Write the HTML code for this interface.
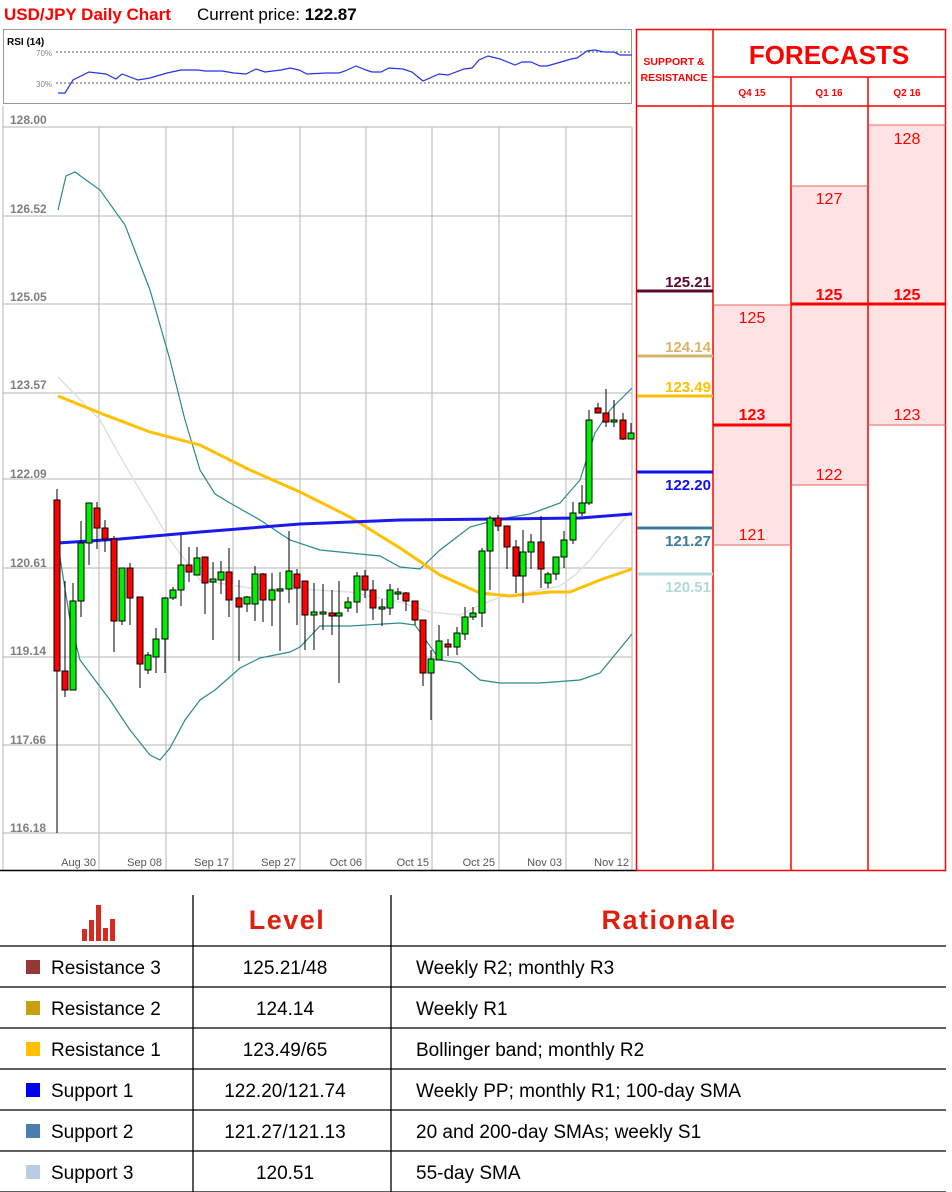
<!DOCTYPE html>
<html><head><meta charset="utf-8"><style>
body{margin:0;background:#fff;width:952px;height:1192px;overflow:hidden;font-family:"Liberation Sans",sans-serif}
svg{display:block}
</style></head><body>
<svg width="952" height="1192" xmlns="http://www.w3.org/2000/svg" font-family="Liberation Sans, sans-serif">
<text x="4" y="20" fill="#ff0000" font-size="17" font-weight="bold">USD/JPY Daily Chart</text>
<text x="197" y="20" fill="#000" font-size="17">Current price: <tspan font-weight="bold">122.87</tspan></text>
<rect x="3.5" y="29.5" width="628" height="74" fill="#fff" stroke="#999"/>
<text x="7" y="45" font-size="10" font-weight="bold">RSI (14)</text>
<text x="36" y="56" font-size="8" fill="#888">70%</text>
<text x="36" y="87" font-size="8" fill="#888">30%</text>
<line x1="56" y1="52" x2="632" y2="52" stroke="#555" stroke-dasharray="2,2"/>
<line x1="56" y1="83" x2="632" y2="83" stroke="#555" stroke-dasharray="2,2"/>
<polyline fill="none" stroke="#2233ee" stroke-width="1.2" points="58,93 65,93 73,80 89,72 106,74 116,79 122,74 138,80 150,78 167,73 181,70 198,70 205,71 222,71 234,73 246,74 256,69 265,72 281,70 290,68 299,70 307,74 326,73 339,73 345,71 356,66 366,70 372,72 381,72 389,68 403,69 412,72 423,81 439,74 448,75 464,69 472,68 479,60 488,56 500,59 515,65 522,62 531,62 540,66 547,66 561,62 571,59 577,58 587,51 595,50 604,52 614,52 620,55 632,55"/>
<g stroke="#b5b5b5" stroke-width="1">
<line x1="3" y1="127" x2="632" y2="127"/><line x1="3" y1="216" x2="632" y2="216"/><line x1="3" y1="304" x2="632" y2="304"/><line x1="3" y1="393" x2="632" y2="393"/><line x1="3" y1="479" x2="632" y2="479"/><line x1="3" y1="568" x2="632" y2="568"/><line x1="3" y1="657" x2="632" y2="657"/><line x1="3" y1="745" x2="632" y2="745"/><line x1="3" y1="833" x2="632" y2="833"/>
<line x1="99" y1="127" x2="99" y2="870"/><line x1="166" y1="127" x2="166" y2="870"/><line x1="233" y1="127" x2="233" y2="870"/><line x1="300" y1="127" x2="300" y2="870"/><line x1="366" y1="127" x2="366" y2="870"/><line x1="432" y1="127" x2="432" y2="870"/><line x1="499" y1="127" x2="499" y2="870"/><line x1="566" y1="127" x2="566" y2="870"/><line x1="632" y1="127" x2="632" y2="870"/>
<line x1="3" y1="106" x2="3" y2="870"/>
</g>
<line x1="0" y1="870.5" x2="637" y2="870.5" stroke="#000" stroke-width="1.5"/>
<g font-size="12" fill="#7f7f7f" font-weight="bold">
<text x="10" y="124">128.00</text><text x="10" y="213">126.52</text><text x="10" y="301">125.05</text><text x="10" y="389">123.57</text><text x="10" y="478">122.09</text><text x="10" y="567">120.61</text><text x="10" y="655">119.14</text><text x="10" y="744">117.66</text><text x="10" y="832">116.18</text>
</g>
<g font-size="11" fill="#555" text-anchor="end">
<text x="96" y="866">Aug 30</text><text x="162" y="866">Sep 08</text><text x="229" y="866">Sep 17</text><text x="296" y="866">Sep 27</text><text x="362" y="866">Oct 06</text><text x="429" y="866">Oct 15</text><text x="495" y="866">Oct 25</text><text x="562" y="866">Nov 03</text><text x="629" y="866">Nov 12</text>
</g>
<polyline fill="none" stroke="#e0e0e0" stroke-width="1.5" points="58,377 100,420 125,465 140,490 170,540 200,580 250,588 300,589 350,592 400,602 430,612 460,615 480,605 500,597 530,592 560,586 575,575 590,560 610,535 632,510"/>
<polyline fill="none" stroke="#2a8a8a" stroke-width="1.2" points="58,210 66,176 75,172 100,190 125,225 150,290 170,360 185,420 200,470 215,494 230,503 260,520 290,540 320,550 350,553 380,556 400,567 420,569 440,550 470,527 500,519 530,514 560,503 580,480 595,433 610,410 632,388"/>
<polyline fill="none" stroke="#2a8a8a" stroke-width="1.2" points="58,545 70,620 80,660 95,680 110,700 130,730 150,755 160,760 170,748 185,720 200,700 215,690 240,668 260,658 290,652 300,647 320,626 350,626 400,623 415,625 440,660 460,663 480,680 500,683 540,683 580,680 600,673 632,634"/>
<polyline fill="none" stroke="#ffc000" stroke-width="3" points="58,396 100,413 150,432 200,445 250,470 300,492 350,517 400,548 440,575 480,593 510,596 550,592 570,592 600,580 632,569"/>
<polyline fill="none" stroke="#1a1aee" stroke-width="3" points="58,543 120,539 200,532 300,524 400,520 500,519 580,518 632,514"/>
<g stroke="#000" stroke-width="1">
<line x1="57" y1="489" x2="57" y2="833"/><rect x="54" y="500" width="6" height="171" fill="#f00"/>
<line x1="65" y1="581" x2="65" y2="697"/><rect x="62" y="671" width="6" height="19" fill="#f00"/>
<line x1="73" y1="583" x2="73" y2="690"/><rect x="70" y="601" width="6" height="89" fill="#0e0"/>
<line x1="81" y1="521" x2="81" y2="617"/><rect x="78" y="543" width="6" height="58" fill="#0e0"/>
<line x1="89" y1="503" x2="89" y2="565"/><rect x="86" y="503" width="6" height="40" fill="#0e0"/>
<line x1="97" y1="502" x2="97" y2="549"/><rect x="94" y="508" width="6" height="20" fill="#f00"/>
<line x1="105" y1="520" x2="105" y2="552"/><rect x="102" y="528" width="6" height="11" fill="#f00"/>
<line x1="114" y1="536" x2="114" y2="652"/><rect x="111" y="539" width="6" height="82" fill="#f00"/>
<line x1="122" y1="568" x2="122" y2="625"/><rect x="119" y="568" width="6" height="53" fill="#0e0"/>
<line x1="130" y1="563" x2="130" y2="625"/><rect x="127" y="568" width="6" height="30" fill="#f00"/>
<line x1="140" y1="597" x2="140" y2="688"/><rect x="137" y="597" width="6" height="67" fill="#f00"/>
<line x1="148" y1="652" x2="148" y2="674"/><rect x="145" y="655" width="6" height="15" fill="#0e0"/>
<line x1="156" y1="628" x2="156" y2="673"/><rect x="153" y="639" width="6" height="18" fill="#0e0"/>
<line x1="165" y1="597" x2="165" y2="673"/><rect x="162" y="598" width="6" height="41" fill="#0e0"/>
<line x1="173" y1="587" x2="173" y2="600"/><rect x="170" y="590" width="6" height="8" fill="#0e0"/>
<line x1="181" y1="535" x2="181" y2="606"/><rect x="178" y="565" width="6" height="25" fill="#0e0"/>
<line x1="189" y1="547" x2="189" y2="582"/><rect x="186" y="565" width="6" height="7" fill="#f00"/>
<line x1="197" y1="547" x2="197" y2="574"/><rect x="194" y="558" width="6" height="17" fill="#0e0"/>
<line x1="205" y1="557" x2="205" y2="614"/><rect x="202" y="557" width="6" height="26" fill="#f00"/>
<line x1="213" y1="562" x2="213" y2="640"/><rect x="210" y="579" width="6" height="3" fill="#0e0"/>
<line x1="221" y1="561" x2="221" y2="594"/><rect x="218" y="572" width="6" height="8" fill="#0e0"/>
<line x1="229" y1="548" x2="229" y2="617"/><rect x="226" y="572" width="6" height="28" fill="#f00"/>
<line x1="239" y1="580" x2="239" y2="661"/><rect x="236" y="598" width="6" height="9" fill="#f00"/>
<line x1="247" y1="596" x2="247" y2="612"/><rect x="244" y="597" width="6" height="7" fill="#0e0"/>
<line x1="255" y1="566" x2="255" y2="621"/><rect x="252" y="574" width="6" height="30" fill="#0e0"/>
<line x1="263" y1="573" x2="263" y2="622"/><rect x="260" y="574" width="6" height="26" fill="#f00"/>
<line x1="272" y1="573" x2="272" y2="626"/><rect x="269" y="590" width="6" height="10" fill="#0e0"/>
<line x1="280" y1="572" x2="280" y2="651"/><rect x="277" y="589" width="6" height="2" fill="#0e0"/>
<line x1="289" y1="531" x2="289" y2="603"/><rect x="286" y="571" width="6" height="18" fill="#0e0"/>
<line x1="297" y1="569" x2="297" y2="625"/><rect x="294" y="574" width="6" height="14" fill="#f00"/>
<line x1="305" y1="581" x2="305" y2="650"/><rect x="302" y="581" width="6" height="34" fill="#f00"/>
<line x1="314" y1="583" x2="314" y2="650"/><rect x="311" y="612" width="6" height="3" fill="#0e0"/>
<line x1="323" y1="584" x2="323" y2="630"/><rect x="320" y="612" width="6" height="2" fill="#0e0"/>
<line x1="332" y1="590" x2="332" y2="635"/><rect x="329" y="613" width="6" height="3" fill="#f00"/>
<line x1="339" y1="581" x2="339" y2="683"/><rect x="336" y="613" width="6" height="3" fill="#0e0"/>
<line x1="348" y1="597" x2="348" y2="612"/><rect x="345" y="602" width="6" height="6" fill="#0e0"/>
<line x1="357" y1="572" x2="357" y2="613"/><rect x="354" y="576" width="6" height="26" fill="#0e0"/>
<line x1="365" y1="570" x2="365" y2="598"/><rect x="362" y="576" width="6" height="14" fill="#f00"/>
<line x1="373" y1="580" x2="373" y2="620"/><rect x="370" y="590" width="6" height="18" fill="#f00"/>
<line x1="382" y1="599" x2="382" y2="626"/><rect x="379" y="607" width="6" height="2" fill="#0e0"/>
<line x1="390" y1="584" x2="390" y2="615"/><rect x="387" y="590" width="6" height="18" fill="#0e0"/>
<line x1="398" y1="588" x2="398" y2="600"/><rect x="395" y="592" width="6" height="2" fill="#0e0"/>
<line x1="406" y1="592" x2="406" y2="611"/><rect x="403" y="593" width="6" height="8" fill="#f00"/>
<line x1="415" y1="601" x2="415" y2="625"/><rect x="412" y="601" width="6" height="19" fill="#f00"/>
<line x1="423" y1="620" x2="423" y2="686"/><rect x="420" y="620" width="6" height="53" fill="#f00"/>
<line x1="431" y1="650" x2="431" y2="720"/><rect x="428" y="659" width="6" height="14" fill="#0e0"/>
<line x1="439" y1="625" x2="439" y2="660"/><rect x="436" y="641" width="6" height="19" fill="#0e0"/>
<line x1="448" y1="639" x2="448" y2="656"/><rect x="445" y="644" width="6" height="3" fill="#f00"/>
<line x1="457" y1="627" x2="457" y2="655"/><rect x="454" y="633" width="6" height="14" fill="#0e0"/>
<line x1="465" y1="607" x2="465" y2="640"/><rect x="462" y="617" width="6" height="17" fill="#0e0"/>
<line x1="473" y1="607" x2="473" y2="620"/><rect x="470" y="613" width="6" height="4" fill="#0e0"/>
<line x1="482" y1="548" x2="482" y2="627"/><rect x="479" y="551" width="6" height="62" fill="#0e0"/>
<line x1="490" y1="516" x2="490" y2="590"/><rect x="487" y="518" width="6" height="33" fill="#0e0"/>
<line x1="498" y1="515" x2="498" y2="531"/><rect x="495" y="518" width="6" height="8" fill="#f00"/>
<line x1="507" y1="526" x2="507" y2="569"/><rect x="504" y="526" width="6" height="21" fill="#f00"/>
<line x1="516" y1="540" x2="516" y2="593"/><rect x="513" y="547" width="6" height="29" fill="#f00"/>
<line x1="523" y1="530" x2="523" y2="603"/><rect x="520" y="552" width="6" height="24" fill="#0e0"/>
<line x1="531" y1="534" x2="531" y2="569"/><rect x="528" y="542" width="6" height="10" fill="#0e0"/>
<line x1="541" y1="516" x2="541" y2="588"/><rect x="538" y="542" width="6" height="27" fill="#f00"/>
<line x1="548" y1="572" x2="548" y2="588"/><rect x="545" y="574" width="6" height="9" fill="#0e0"/>
<line x1="556" y1="557" x2="556" y2="580"/><rect x="553" y="557" width="6" height="17" fill="#0e0"/>
<line x1="564" y1="531" x2="564" y2="568"/><rect x="561" y="540" width="6" height="17" fill="#0e0"/>
<line x1="573" y1="502" x2="573" y2="544"/><rect x="570" y="513" width="6" height="27" fill="#0e0"/>
<line x1="582" y1="485" x2="582" y2="516"/><rect x="579" y="503" width="6" height="10" fill="#0e0"/>
<line x1="589" y1="410" x2="589" y2="505"/><rect x="586" y="420" width="6" height="83" fill="#0e0"/>
<line x1="598" y1="403" x2="598" y2="413"/><rect x="595" y="408" width="6" height="5" fill="#f00"/>
<line x1="606" y1="389" x2="606" y2="427"/><rect x="603" y="413" width="6" height="9" fill="#f00"/>
<line x1="614" y1="400" x2="614" y2="427"/><rect x="611" y="420" width="6" height="2" fill="#0e0"/>
<line x1="623" y1="413" x2="623" y2="440"/><rect x="620" y="420" width="6" height="19" fill="#f00"/>
<line x1="631" y1="423" x2="631" y2="439"/><rect x="628" y="433" width="6" height="6" fill="#0e0"/>
</g>
<rect x="791" y="186" width="77" height="299" fill="#fde3e3"/>
<rect x="868" y="125" width="78" height="300" fill="#fde3e3"/>
<rect x="713" y="305" width="78" height="240" fill="#fde3e3"/>
<g stroke="#f00" stroke-width="1.5" fill="none">
<rect x="636.5" y="29.5" width="309" height="841"/>
<line x1="713" y1="29" x2="713" y2="870"/>
<line x1="791" y1="77" x2="791" y2="870"/>
<line x1="868" y1="77" x2="868" y2="870"/>
<line x1="713" y1="77" x2="946" y2="77"/>
<line x1="636" y1="106" x2="946" y2="106"/>
</g>
<g stroke="#f06060" stroke-width="1">
<line x1="868" y1="125" x2="946" y2="125"/><line x1="791" y1="186" x2="868" y2="186"/><line x1="713" y1="305" x2="791" y2="305"/>
<line x1="713" y1="545" x2="791" y2="545"/><line x1="791" y1="485" x2="868" y2="485"/><line x1="868" y1="425" x2="946" y2="425"/>
</g>
<g stroke="#f00" stroke-width="3"><line x1="791" y1="304" x2="946" y2="304"/><line x1="713" y1="425" x2="791" y2="425"/></g>
<text x="674" y="65" text-anchor="middle" font-size="10.5" font-weight="bold" fill="#f00">SUPPORT &amp;</text>
<text x="674" y="81" text-anchor="middle" font-size="10.5" font-weight="bold" fill="#f00">RESISTANCE</text>
<text x="829" y="64" text-anchor="middle" font-size="26" font-weight="bold" fill="#f00">FORECASTS</text>
<g font-size="10" font-weight="bold" fill="#f00" text-anchor="middle"><text x="752" y="96">Q4 15</text><text x="829" y="96">Q1 16</text><text x="907" y="96">Q2 16</text></g>
<g font-size="16" fill="#f00" text-anchor="middle">
<text x="907" y="144">128</text><text x="829" y="204">127</text><text x="752" y="323">125</text><text x="829" y="480">122</text><text x="907" y="420">123</text><text x="752" y="540">121</text>
<text x="829" y="300" font-weight="bold">125</text><text x="907" y="300" font-weight="bold">125</text><text x="752" y="420" font-weight="bold">123</text>
</g>
<g stroke-width="3">
<line x1="637" y1="291" x2="713" y2="291" stroke="#5a0a30"/><line x1="637" y1="356" x2="713" y2="356" stroke="#d8b468"/><line x1="637" y1="396" x2="713" y2="396" stroke="#ffc000"/><line x1="637" y1="472" x2="713" y2="472" stroke="#1010ee"/><line x1="637" y1="528" x2="713" y2="528" stroke="#3b7c98"/><line x1="637" y1="574" x2="713" y2="574" stroke="#b3d8d8"/>
</g>
<g font-size="15" font-weight="bold" text-anchor="end">
<text x="711" y="287" fill="#5a0a30">125.21</text><text x="711" y="352" fill="#d8b468">124.14</text><text x="711" y="392" fill="#ffc000">123.49</text><text x="711" y="490" fill="#1010ee">122.20</text><text x="711" y="546" fill="#3b7c98">121.27</text><text x="711" y="592" fill="#b3d8d8">120.51</text>
</g>
<g stroke="#000" stroke-width="1.3">
<line x1="193" y1="895" x2="193" y2="1192"/><line x1="391" y1="895" x2="391" y2="1192"/>
<line x1="0" y1="946" x2="946" y2="946"/><line x1="0" y1="987" x2="946" y2="987"/><line x1="0" y1="1028" x2="946" y2="1028"/><line x1="0" y1="1069" x2="946" y2="1069"/><line x1="0" y1="1110" x2="946" y2="1110"/><line x1="0" y1="1151" x2="946" y2="1151"/><line x1="0" y1="1192" x2="946" y2="1192"/>
</g>
<g fill="#d42a20"><rect x="82" y="929" width="5" height="12"/><rect x="89" y="920" width="5" height="21"/><rect x="96" y="905" width="5" height="36"/><rect x="103" y="928" width="5" height="13"/><rect x="110" y="919" width="5" height="22"/></g>
<text x="287" y="929" text-anchor="middle" font-size="27" font-weight="bold" letter-spacing="1.5" fill="#e0200f">Level</text>
<text x="669" y="929" text-anchor="middle" font-size="27" font-weight="bold" letter-spacing="1.5" fill="#e0200f">Rationale</text>
<g font-size="19" fill="#000">
<rect x="26" y="960" width="14" height="14" fill="#953735"/><text x="51" y="974">Resistance 3</text><text x="285" y="974" text-anchor="middle">125.21/48</text><text x="416" y="974">Weekly R2; monthly R3</text>
<rect x="26" y="1001" width="14" height="14" fill="#c9a00a"/><text x="51" y="1015">Resistance 2</text><text x="285" y="1015" text-anchor="middle">124.14</text><text x="416" y="1015">Weekly R1</text>
<rect x="26" y="1042" width="14" height="14" fill="#ffc000"/><text x="51" y="1056">Resistance 1</text><text x="285" y="1056" text-anchor="middle">123.49/65</text><text x="416" y="1056">Bollinger band; monthly R2</text>
<rect x="26" y="1083" width="14" height="14" fill="#0000ee"/><text x="51" y="1097">Support 1</text><text x="285" y="1097" text-anchor="middle">122.20/121.74</text><text x="416" y="1097">Weekly PP; monthly R1; 100-day SMA</text>
<rect x="26" y="1124" width="14" height="14" fill="#4a7eb0"/><text x="51" y="1138">Support 2</text><text x="285" y="1138" text-anchor="middle">121.27/121.13</text><text x="416" y="1138">20 and 200-day SMAs; weekly S1</text>
<rect x="26" y="1165" width="14" height="14" fill="#b8cce4"/><text x="51" y="1179">Support 3</text><text x="285" y="1179" text-anchor="middle">120.51</text><text x="416" y="1179">55-day SMA</text>
</g>
</svg>
</body></html>
